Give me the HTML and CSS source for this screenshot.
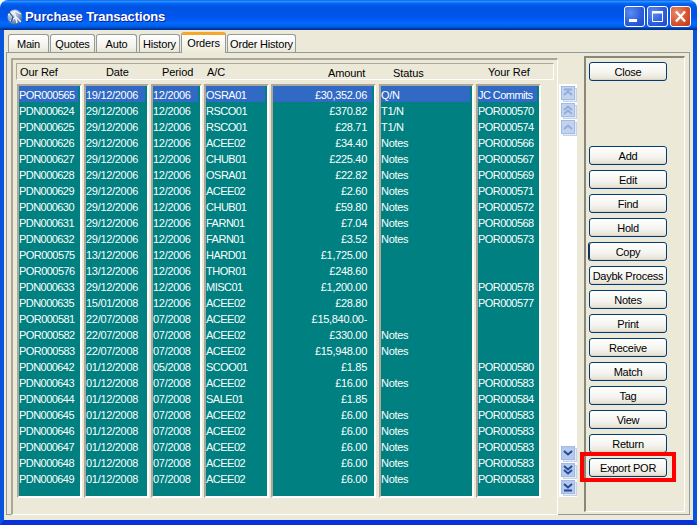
FILE: index.html
```html
<!DOCTYPE html>
<html lang="en">
<head>
<meta charset="utf-8">
<title>Purchase Transactions</title>
<link rel="stylesheet" href="styles.css">
</head>
<body>
<div class="window">
  <header class="titlebar">
    <svg class="app-icon" width="18" height="18" viewBox="0 0 18 18">
      <defs><radialGradient id="globe" cx="0.35" cy="0.3" r="0.8"><stop offset="0" stop-color="#e8eef8"/><stop offset="0.6" stop-color="#7f9cc4"/><stop offset="1" stop-color="#3a5a8c"/></radialGradient></defs>
      <circle cx="9" cy="9" r="7.5" fill="url(#globe)"/>
      <path d="M2 7 L9 3 L15 6 M4 13 L10 9 L15 14 M8 3 L11 15" fill="none" stroke="#f4f7fc" stroke-width="1.3"/>
      <path d="M3 4 L7 9 L5 14" fill="none" stroke="#2f4c7d" stroke-width="1.2"/>
    </svg>
    <h1 class="title">Purchase Transactions</h1>
    <div class="win-buttons">
      <div class="win-btn"><svg width="19" height="19" viewBox="0 0 19 19"><rect x="4" y="12" width="8" height="3" fill="#fff"/></svg></div>
      <div class="win-btn"><svg width="19" height="19" viewBox="0 0 19 19"><path d="M4.5 4.5H14.5V14.5H4.5Z" fill="none" stroke="#fff"/><rect x="4" y="4" width="11" height="2.5" fill="#fff"/></svg></div>
      <div class="win-btn win-close"><svg width="19" height="19" viewBox="0 0 19 19"><path d="M5 4.5 L14 14.5 M14 4.5 L5 14.5" stroke="#fff" stroke-width="2.4" fill="none"/></svg></div>
    </div>
  </header>
  <div class="frame">
    <nav class="tabs">
      <div class="tab tab-main">Main</div>
      <div class="tab tab-quotes">Quotes</div>
      <div class="tab tab-auto">Auto</div>
      <div class="tab tab-history">History</div>
      <div class="tab tab-orders active">Orders</div>
      <div class="tab tab-orderhistory">Order History</div>
    </nav>
    <main class="pane">
      <section class="group">
        <div class="headers">
          <span class="h-ref">Our Ref</span>
          <span class="h-date">Date</span>
          <span class="h-period">Period</span>
          <span class="h-ac">A/C</span>
          <span class="h-amount">Amount</span>
          <span class="h-status">Status</span>
          <span class="h-your">Your Ref</span>
        </div>
        <div class="lists">
          <div class="col col-ref">
            <div class="row sel">POR000565</div><div class="row">PDN000624</div><div class="row">PDN000625</div><div class="row">PDN000626</div><div class="row">PDN000627</div><div class="row">PDN000628</div><div class="row">PDN000629</div><div class="row">PDN000630</div><div class="row">PDN000631</div><div class="row">PDN000632</div><div class="row">POR000575</div><div class="row">POR000576</div><div class="row">PDN000633</div><div class="row">PDN000635</div><div class="row">POR000581</div><div class="row">POR000582</div><div class="row">POR000583</div><div class="row">PDN000642</div><div class="row">PDN000643</div><div class="row">PDN000644</div><div class="row">PDN000645</div><div class="row">PDN000646</div><div class="row">PDN000647</div><div class="row">PDN000648</div><div class="row">PDN000649</div>
          </div>
          <div class="col col-date">
            <div class="row sel">19/12/2006</div><div class="row">29/12/2006</div><div class="row">29/12/2006</div><div class="row">29/12/2006</div><div class="row">29/12/2006</div><div class="row">29/12/2006</div><div class="row">29/12/2006</div><div class="row">29/12/2006</div><div class="row">29/12/2006</div><div class="row">29/12/2006</div><div class="row">13/12/2006</div><div class="row">13/12/2006</div><div class="row">29/12/2006</div><div class="row">15/01/2008</div><div class="row">22/07/2008</div><div class="row">22/07/2008</div><div class="row">22/07/2008</div><div class="row">01/12/2008</div><div class="row">01/12/2008</div><div class="row">01/12/2008</div><div class="row">01/12/2008</div><div class="row">01/12/2008</div><div class="row">01/12/2008</div><div class="row">01/12/2008</div><div class="row">01/12/2008</div>
          </div>
          <div class="col col-period">
            <div class="row sel">12/2006</div><div class="row">12/2006</div><div class="row">12/2006</div><div class="row">12/2006</div><div class="row">12/2006</div><div class="row">12/2006</div><div class="row">12/2006</div><div class="row">12/2006</div><div class="row">12/2006</div><div class="row">12/2006</div><div class="row">12/2006</div><div class="row">12/2006</div><div class="row">12/2006</div><div class="row">12/2006</div><div class="row">07/2008</div><div class="row">07/2008</div><div class="row">07/2008</div><div class="row">05/2008</div><div class="row">07/2008</div><div class="row">07/2008</div><div class="row">07/2008</div><div class="row">07/2008</div><div class="row">07/2008</div><div class="row">07/2008</div><div class="row">07/2008</div>
          </div>
          <div class="col col-ac">
            <div class="row sel">OSRA01</div><div class="row">RSCO01</div><div class="row">RSCO01</div><div class="row">ACEE02</div><div class="row">CHUB01</div><div class="row">OSRA01</div><div class="row">ACEE02</div><div class="row">CHUB01</div><div class="row">FARN01</div><div class="row">FARN01</div><div class="row">HARD01</div><div class="row">THOR01</div><div class="row">MISC01</div><div class="row">ACEE02</div><div class="row">ACEE02</div><div class="row">ACEE02</div><div class="row">ACEE02</div><div class="row">SCOO01</div><div class="row">ACEE02</div><div class="row">SALE01</div><div class="row">ACEE02</div><div class="row">ACEE02</div><div class="row">ACEE02</div><div class="row">ACEE02</div><div class="row">ACEE02</div>
          </div>
          <div class="col col-amount">
            <div class="row sel">£30,352.06</div><div class="row">£370.82</div><div class="row">£28.71</div><div class="row">£34.40</div><div class="row">£225.40</div><div class="row">£22.82</div><div class="row">£2.60</div><div class="row">£59.80</div><div class="row">£7.04</div><div class="row">£3.52</div><div class="row">£1,725.00</div><div class="row">£248.60</div><div class="row">£1,200.00</div><div class="row">£28.80</div><div class="row">£15,840.00-</div><div class="row">£330.00</div><div class="row">£15,948.00</div><div class="row">£1.85</div><div class="row">£16.00</div><div class="row">£1.85</div><div class="row">£6.00</div><div class="row">£6.00</div><div class="row">£6.00</div><div class="row">£6.00</div><div class="row">£6.00</div>
          </div>
          <div class="col col-status">
            <div class="row sel">Q/N</div><div class="row">T1/N</div><div class="row">T1/N</div><div class="row">Notes</div><div class="row">Notes</div><div class="row">Notes</div><div class="row">Notes</div><div class="row">Notes</div><div class="row">Notes</div><div class="row">Notes</div><div class="row"></div><div class="row"></div><div class="row"></div><div class="row"></div><div class="row"></div><div class="row">Notes</div><div class="row">Notes</div><div class="row"></div><div class="row">Notes</div><div class="row"></div><div class="row">Notes</div><div class="row">Notes</div><div class="row">Notes</div><div class="row">Notes</div><div class="row">Notes</div>
          </div>
          <div class="col col-your">
            <div class="row sel">JC Commits</div><div class="row">POR000570</div><div class="row">POR000574</div><div class="row">POR000566</div><div class="row">POR000567</div><div class="row">POR000569</div><div class="row">POR000571</div><div class="row">POR000572</div><div class="row">POR000568</div><div class="row">POR000573</div><div class="row"></div><div class="row"></div><div class="row">POR000578</div><div class="row">POR000577</div><div class="row"></div><div class="row"></div><div class="row"></div><div class="row">POR000580</div><div class="row">POR000583</div><div class="row">POR000584</div><div class="row">POR000583</div><div class="row">POR000583</div><div class="row">POR000583</div><div class="row">POR000583</div><div class="row">POR000583</div>
          </div>
        </div>
      </section>
      <aside class="scroller">
        <div class="scroll-group">
          <svg class="sbtn off" viewBox="0 0 16 16"><rect class="sb-back" x="2.5" y="2.5" width="13" height="13"/><rect class="sb-face" x="0.5" y="0.5" width="13" height="13"/><path class="sb-mark" d="M3 3.5H11M3 9L7 5.5L11 9"/></svg>
          <svg class="sbtn off" viewBox="0 0 16 16"><rect class="sb-back" x="2.5" y="2.5" width="13" height="13"/><rect class="sb-face" x="0.5" y="0.5" width="13" height="13"/><path class="sb-mark" d="M3 7L7 3.5L11 7M3 11L7 7.5L11 11"/></svg>
          <svg class="sbtn off" viewBox="0 0 16 16"><rect class="sb-back" x="2.5" y="2.5" width="13" height="13"/><rect class="sb-face" x="0.5" y="0.5" width="13" height="13"/><path class="sb-mark" d="M3 9L7 5.5L11 9"/></svg>
        </div>
        <div class="scroll-group">
          <svg class="sbtn" viewBox="0 0 16 16"><rect class="sb-back" x="2.5" y="2.5" width="13" height="13"/><rect class="sb-face" x="0.5" y="0.5" width="13" height="13"/><path class="sb-mark" d="M3 5L7 8.5L11 5"/></svg>
          <svg class="sbtn" viewBox="0 0 16 16"><rect class="sb-back" x="2.5" y="2.5" width="13" height="13"/><rect class="sb-face" x="0.5" y="0.5" width="13" height="13"/><path class="sb-mark" d="M3 3L7 6.5L11 3M3 7L7 10.5L11 7"/></svg>
          <svg class="sbtn" viewBox="0 0 16 16"><rect class="sb-back" x="2.5" y="2.5" width="13" height="13"/><rect class="sb-face" x="0.5" y="0.5" width="13" height="13"/><path class="sb-mark" d="M3 4L7 7.5L11 4M3 10.5H11"/></svg>
        </div>
      </aside>
      <aside class="actions">
        <button class="btn btn-close">Close</button>
        <button class="btn">Add</button>
        <button class="btn">Edit</button>
        <button class="btn">Find</button>
        <button class="btn">Hold</button>
        <button class="btn btn-focus">Copy</button>
        <button class="btn">Daybk Process</button>
        <button class="btn">Notes</button>
        <button class="btn">Print</button>
        <button class="btn">Receive</button>
        <button class="btn">Match</button>
        <button class="btn">Tag</button>
        <button class="btn">View</button>
        <button class="btn">Return</button>
        <button class="btn btn-export">Export POR</button>
      </aside>
    </main>
  </div>
</div>
</body>
</html>
```
FILE: styles.css
```css
* { box-sizing: border-box; }
html, body { margin: 0; padding: 0; }
body {
  width: 697px;
  height: 525px;
  overflow: hidden;
  background: #fff;
  font-family: "Liberation Sans", Arial, sans-serif;
  font-size: 11px;
  color: #000;
}
.window {
  width: 697px;
  height: 525px;
  display: flex;
  flex-direction: column;
  border-radius: 8px 8px 0 0;
  overflow: hidden;
}
.titlebar {
  flex: 0 0 30px;
  display: flex;
  align-items: center;
  padding: 6px 6px 3px 6px;
  background: linear-gradient(to bottom, #0058e6 0%, #3593ff 4%, #288eff 6%, #127dff 8%, #036ffc 10%, #0262ee 14%, #0057e5 20%, #0054e3 24%, #0055eb 56%, #005bf5 66%, #026afe 76%, #0062ef 86%, #0052d6 92%, #0040ab 94%, #003092 100%);
}
.app-icon { flex: none; width: 18px; height: 18px; }
.title {
  flex: 1;
  margin: 0 0 0 1px;
  font-size: 13px;
  font-weight: bold;
  line-height: 16px;
  letter-spacing: -0.1px;
  color: #fff;
  text-shadow: 1px 1px 0 #0f1f8f;
}
.win-buttons { display: flex; gap: 2px; }
.win-btn {
  width: 21px;
  height: 21px;
  border: 1px solid #fff;
  border-radius: 3px;
  background: radial-gradient(circle at 30% 30%, #5d8cf0 0%, #2f5fdc 55%, #2146c4 100%);
}
.win-btn svg { display: block; }
.win-close { background: radial-gradient(circle at 30% 30%, #e98a6c 0%, #d9532f 55%, #b8361a 100%); }
.frame {
  flex: 1;
  display: flex;
  flex-direction: column;
  min-height: 0;
  background: #ece9d8;
  border-left: 4px solid #0855dd;
  border-right: 4px solid #0855dd;
  border-bottom: 5px solid #0831d9;
  padding: 2px 3px 5px 2px;
}
.tabs {
  flex: 0 0 20px;
  display: flex;
  align-items: flex-end;
  gap: 1px;
  padding-left: 2px;
  position: relative;
  z-index: 1;
}
.tab {
  height: 18px;
  border: 1px solid #919b9c;
  border-bottom: 0;
  border-radius: 3px 3px 0 0;
  background: linear-gradient(to bottom, #fff 0%, #f3f1e9 70%, #e8e5d6 100%);
  display: flex;
  align-items: center;
  justify-content: center;
  letter-spacing: -0.2px;
  white-space: nowrap;
}
.tab-main { width: 41px; }
.tab-quotes { width: 45px; }
.tab-auto { width: 41px; }
.tab-history { width: 41px; margin-left: 1px; }
.tab-orders { width: 45px; }
.tab-orderhistory { width: 69px; }
.tab.active {
  height: 21px;
  margin-bottom: -1px;
  padding-bottom: 3px;
  border-top: 3px solid #f3a72d;
  background: linear-gradient(to bottom, #fff 0%, #f6f4ec 60%, #ece9d8 100%);
}
.pane {
  flex: 1;
  min-height: 0;
  display: flex;
  align-items: flex-start;
  background: #ece9d8;
  border: 1px solid #919b9c;
}
.group {
  width: 547px;
  height: 457px;
  margin: 5px 0 0 4px;
  padding: 3px 0 0 3px;
  border-top: 2px solid #aca899;
  border-left: 2px solid #aca899;
  border-right: 1px solid #fff;
  border-bottom: 1px solid #fff;
}
.headers {
  width: 538px;
  height: 17px;
  display: flex;
  align-items: center;
  padding-left: 3px;
  border-top: 1px solid #aca899;
  border-left: 1px solid #aca899;
  border-right: 1px solid #fff;
  border-bottom: 1px solid #fff;
  letter-spacing: -0.1px;
  white-space: nowrap;
}
.headers span { display: block; flex: none; }
.h-ref { width: 86px; }
.h-date { width: 56px; }
.h-period { width: 45px; }
.h-ac { width: 121px; }
.h-amount { width: 65px; padding-top: 2px; }
.h-status { width: 95px; padding-top: 2px; }
.lists {
  display: flex;
  gap: 2px;
  margin: 4px 0 0 1px;
}
.col {
  height: 414px;
  background: #008080;
  color: #fff;
  border-top: 2px solid #aca899;
  border-left: 2px solid #aca899;
  border-right: 2px solid #fff;
  border-bottom: 2px solid #fff;
  letter-spacing: -0.3px;
  white-space: nowrap;
}
.col-ref { width: 65px; letter-spacing: -0.55px; }
.col-date { width: 65px; }
.col-period { width: 51px; }
.col-ac { width: 65px; letter-spacing: -0.5px; }
.col-amount { width: 105px; margin-right: 1px; }
.col-status { width: 95px; }
.col-your { width: 65px; letter-spacing: -0.55px; }
.row {
  height: 16px;
  line-height: 18px;
  margin-right: 2px;
}
.row.sel { background: #316ac5; }
.col-amount .row { text-align: right; padding-right: 5px; }
.scroller {
  width: 18px;
  height: 413px;
  margin: 31px 0 0 1px;
  padding: 2px 0 1px 2px;
  background: #fff;
  display: flex;
  flex-direction: column;
  justify-content: space-between;
}
.scroll-group { display: flex; flex-direction: column; gap: 1px; }
.sbtn { display: block; width: 16px; height: 16px; }
.sb-back { fill: #e3eaf8; stroke: #c3d2ef; }
.sb-face { fill: #b5c9ea; stroke: #a3b9e6; }
.sb-mark { fill: none; stroke: #23499c; stroke-width: 2; }
.off .sb-face { fill: #c4d3ec; }
.off .sb-mark { stroke: #8facdc; }
.actions {
  width: 101px;
  height: 456px;
  margin: 3px 0 0 7px;
  padding: 4px 0 0 3px;
  border-top: 2px solid #8a8778;
  border-left: 2px solid #8a8778;
  border-right: 1px solid #fff;
  border-bottom: 1px solid #fff;
  display: flex;
  flex-direction: column;
  gap: 5px;
}
.btn {
  width: 78px;
  height: 19px;
  padding: 0;
  border: 1px solid #003c74;
  border-radius: 3px;
  background: linear-gradient(to bottom, #fff 0%, #f4f3ee 60%, #e8e5da 90%, #d6d0c5 100%);
  font-family: "Liberation Sans", Arial, sans-serif;
  font-size: 11px;
  letter-spacing: -0.25px;
  color: #000;
  white-space: nowrap;
  flex: none;
}
.btn-close { margin-bottom: 60px; }
.btn-focus { box-shadow: -1px 0 0 #1d2c50; }
.btn-export { position: relative; }
.btn-export::after {
  content: "";
  position: absolute;
  top: -7px;
  right: -10px;
  bottom: -6px;
  left: -10px;
  border: 4px solid #f00;
}
```
